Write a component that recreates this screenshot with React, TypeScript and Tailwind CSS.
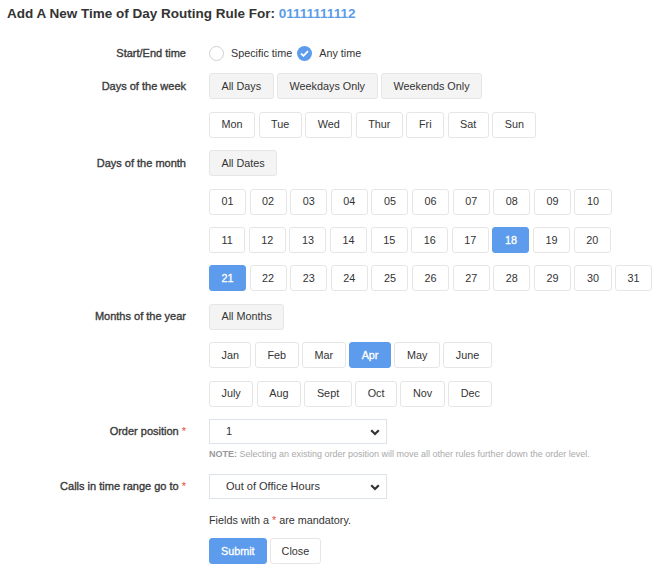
import { ReactNode } from "react";

const days = ["Mon", "Tue", "Wed", "Thur", "Fri", "Sat", "Sun"];
const months = [
  ["Jan", "Feb", "Mar", "Apr", "May", "June"],
  ["July", "Aug", "Sept", "Oct", "Nov", "Dec"],
];
const dateRows = [
  ["01", "02", "03", "04", "05", "06", "07", "08", "09", "10"],
  ["11", "12", "13", "14", "15", "16", "17", "18", "19", "20"],
  ["21", "22", "23", "24", "25", "26", "27", "28", "29", "30", "31"],
];
const selectedDates = ["18", "21"];
const selectedMonths = ["Apr"];

const labelCls =
  "flex w-[186px] shrink-0 items-center justify-end text-[11px] text-[#3a3a3a] [-webkit-text-stroke:0.35px_#3a3a3a]";

function Btn({
  children,
  variant = "default",
}: {
  children: ReactNode;
  variant?: "default" | "gray" | "active";
}) {
  const styles =
    variant === "active"
      ? "bg-[#5d9cec] border-[#5d9cec] text-white [-webkit-text-stroke:0.3px_#fff]"
      : variant === "gray"
        ? "bg-[#f4f4f4] border-[#e6e6e6] text-[#333]"
        : "bg-white border-[#e6e6e6] text-[#333]";
  return (
    <button
      type="button"
      className={`h-[26px] rounded-[3px] border px-[11.5px] text-[10.8px] leading-none ${styles}`}
    >
      {children}
    </button>
  );
}

function Row({ label, children }: { label?: string; children: ReactNode }) {
  return (
    <div className="flex">
      <div className={`h-[26px] ${labelCls}`}>{label}</div>
      <div className="flex flex-col gap-y-[12.4px] pl-[23px]">{children}</div>
    </div>
  );
}

function Select({ value }: { value: string }) {
  return (
    <div className="relative flex h-[25px] w-[178px] items-center border border-[#dde3e8] bg-white pl-[16px] text-[11px] text-[#333]">
      {value}
      <svg width="10" height="7" viewBox="0 0 10 7" className="absolute right-[6px] top-[9px]">
        <path d="M1.2 1.2 L5 5 L8.8 1.2" fill="none" stroke="#333" strokeWidth="2.2" />
      </svg>
    </div>
  );
}

export default function App() {
  return (
    <div className="min-h-[571px] bg-white font-['Liberation_Sans',Arial,sans-serif] text-[#333]">
      <h1 className="pl-[7px] pt-[5px] text-[13.5px] font-bold leading-[17px] text-[#333]">
        Add A New Time of Day Routing Rule For:{" "}
        <span className="text-[#5b9ce8]">01111111112</span>
      </h1>

      <div className="mt-[24px] flex flex-col gap-y-[12.4px]">
        <div className="flex h-[15px]">
          <div className={`h-[15px] ${labelCls}`}>Start/End time</div>
          <div className="flex h-[15px] items-center pl-[23px] text-[10.8px] leading-none text-[#333]">
            <span className="h-[15px] w-[15px] rounded-full border border-[#d0d0d0] bg-white" />
            <span className="ml-[7px]">Specific time</span>
            <span className="ml-[5px] flex h-[15px] w-[15px] items-center justify-center rounded-full bg-[#5d9cec]">
              <svg width="9" height="7" viewBox="0 0 9 7">
                <path d="M1 3.5 L3.5 5.8 L8 1.2" fill="none" stroke="#fff" strokeWidth="1.8" />
              </svg>
            </span>
            <span className="ml-[7px]">Any time</span>
          </div>
        </div>

        <Row label="Days of the week">
          <div className="flex gap-[3.5px]">
            <Btn variant="gray">All Days</Btn>
            <Btn variant="gray">Weekdays Only</Btn>
            <Btn variant="gray">Weekends Only</Btn>
          </div>
          <div className="flex gap-[3.5px]">
            {days.map((d) => (
              <Btn key={d}>{d}</Btn>
            ))}
          </div>
        </Row>

        <Row label="Days of the month">
          <div className="flex">
            <Btn variant="gray">All Dates</Btn>
          </div>
          {dateRows.map((row, i) => (
            <div key={i} className="flex gap-[3.6px]">
              {row.map((d) => (
                <Btn key={d} variant={selectedDates.includes(d) ? "active" : "default"}>
                  {d}
                </Btn>
              ))}
            </div>
          ))}
        </Row>

        <Row label="Months of the year">
          <div className="flex">
            <Btn variant="gray">All Months</Btn>
          </div>
          {months.map((row, i) => (
            <div key={i} className="flex gap-[3.5px]">
              {row.map((m) => (
                <Btn key={m} variant={selectedMonths.includes(m) ? "active" : "default"}>
                  {m}
                </Btn>
              ))}
            </div>
          ))}
        </Row>

        <div className="flex">
          <div className={`h-[25px] ${labelCls}`}>
            Order position<span className="ml-[3px] text-[#e74c3c] [-webkit-text-stroke:0]">*</span>
          </div>
          <div className="pl-[23px]">
            <Select value="1" />
            <p className="mt-[4px] text-[9px] text-[#aaa]">
              <span className="font-bold text-[#999]">NOTE:</span> Selecting an existing order
              position will move all other rules further down the order level.
            </p>
          </div>
        </div>

        <div className="flex">
          <div className={`h-[25px] ${labelCls}`}>
            Calls in time range go to
            <span className="ml-[3px] text-[#e74c3c] [-webkit-text-stroke:0]">*</span>
          </div>
          <div className="pl-[23px]">
            <Select value="Out of Office Hours" />
            <p className="mt-[13px] text-[10.8px] text-[#333]">
              Fields with a <span className="text-[#e74c3c]">*</span> are mandatory.
            </p>
            <div className="mt-[10px] flex gap-[3px]">
              <button
                type="button"
                className="h-[26px] rounded-[3px] border border-[#5d9cec] bg-[#5d9cec] px-[11px] text-[10.8px] text-white [-webkit-text-stroke:0.3px_#fff]"
              >
                Submit
              </button>
              <button
                type="button"
                className="h-[26px] rounded-[3px] border border-[#e6e6e6] bg-white px-[11px] text-[10.8px] text-[#333]"
              >
                Close
              </button>
            </div>
          </div>
        </div>
      </div>
    </div>
  );
}
